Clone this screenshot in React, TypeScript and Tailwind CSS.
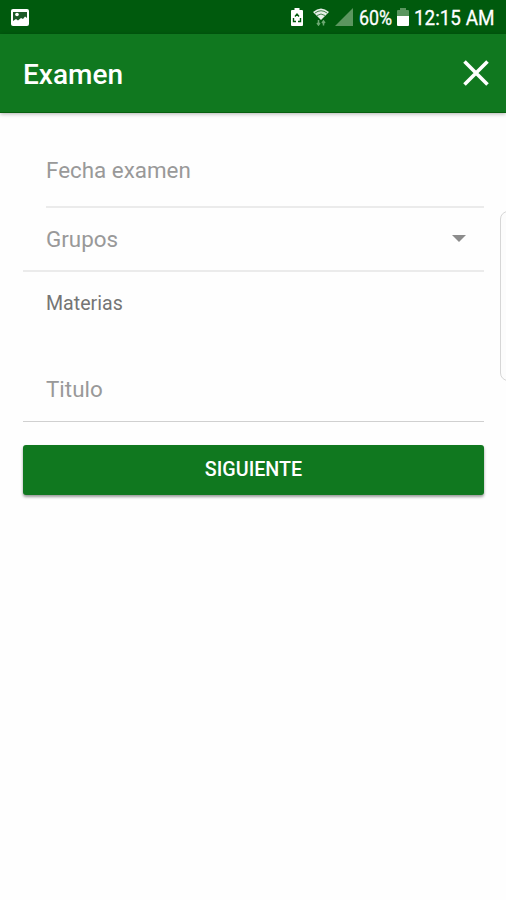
import { useState } from 'react';

const StatusBar: React.FC = () => (
  <div className="flex h-[34px] items-center justify-between bg-[#005a0d] pl-[11px] pr-3 text-white">
    <svg width="18" height="17" viewBox="0 0 18 17">
      <rect width="18" height="17" rx="2" fill="#fff" />
      <path d="M2 3h14v6l-2-1.500-2 2.500-2-1-3 2.500-2-1.500-3 2z" fill="#1d5a28" />
      <circle cx="6" cy="5.500" r="1.800" fill="#fff" />
    </svg>
    <div className="flex items-center">
      <svg width="12" height="18" viewBox="0 0 12 18">
        <path d="M3.500 0h5v2H11q1 0 1 1v14q0 1-1 1H1q-1 0-1-1V3q0-1 1-1h2.500z" fill="#fff" />
        <path d="M4 8.500L6 6l2 2.500M9.500 10v3.500H7M5 13.500H2.500V10" fill="none" stroke="#005a0d" strokeWidth="1.400" />
      </svg>
      <svg className="ml-[10px]" width="16" height="18" viewBox="0 0 16 18">
        <path d="M0 4q8-7 16 0l-8 8z" fill="#fff" opacity=".9" />
        <path d="M2 5q6-4.500 12 0M4 7.500q4-3 8 0" fill="none" stroke="#2f7538" strokeWidth=".9" />
        <path d="M5.500 12v5M4 15l1.500 2 1.500-2M10.500 17.500v-5M9 15l1.500-2 1.500 2" fill="none" stroke="#6da873" strokeWidth="1.500" />
      </svg>
      <svg className="ml-[6px]" width="18" height="18" viewBox="0 0 18 18">
        <path d="M18 0v18H0z" fill="#5b965f" />
      </svg>
      <span className="ml-[6px] w-[34px] whitespace-nowrap pt-[2px] text-[20.500px] leading-none">
        <span className="inline-block origin-left scale-x-[.87] [-webkit-text-stroke:0.3px_white]">60%</span>
      </span>
      <svg className="ml-1" width="12" height="18" viewBox="0 0 12 18">
        <path d="M3 0h6v2h2q1 0 1 1v5H0V3q0-1 1-1h2z" fill="#5b965f" />
        <path d="M0 8h12v9q0 1-1 1H1q-1 0-1-1z" fill="#fff" />
      </svg>
      <span className="ml-[5px] w-[80px] whitespace-nowrap pt-[2px] text-[20.500px] leading-none">
        <span className="inline-block origin-left scale-x-[.92] [-webkit-text-stroke:0.3px_white]">12:15 AM</span>
      </span>
    </div>
  </div>
);

const Header: React.FC = () => (
  <header className="flex h-[79px] items-center justify-between border-b border-[#08600f] bg-[#10781f] pl-[23px] pr-[17px] text-white shadow-[0_1px_4px_rgba(0,0,0,0.3)]">
    <h1 className="pt-[3px] text-[28px] font-medium leading-none">Examen</h1>
    <button aria-label="Cerrar">
      <svg width="26" height="26" viewBox="0 0 26 26">
        <path d="M1.500 1.500l23 23M24.500 1.500l-23 23" stroke="#fff" strokeWidth="3.600" />
      </svg>
    </button>
  </header>
);

const App: React.FC = () => {
  const [titulo, setTitulo] = useState('');

  return (
    <div className="relative h-[900px] w-[506px] overflow-hidden bg-[#fefefe] font-['Roboto',sans-serif]">
      <StatusBar />
      <Header />
      <main className="pl-[23px] pr-[22px] pt-[21px]">
        <div className="ml-[23px] flex h-[74px] items-center border-b-2 border-[#ebebeb] pt-[2px] text-[22.400px] text-[#999]">
          Fecha examen
        </div>
        <div className="flex h-16 items-center justify-between border-b-2 border-[#ebebeb] pl-[23px] pr-[18px] text-[22.400px] text-[#999]">
          <span className="pt-[2px]">Grupos</span>
          <svg className="mb-[2px]" width="14" height="7" viewBox="0 0 14 7">
            <path d="M0 0h14L7 7z" fill="#8c8c8c" />
          </svg>
        </div>
        <div className="flex h-[86px] items-start pl-[23px] pt-5 text-[19.600px] leading-6 text-[#757575]">
          Materias
        </div>
        <div className="flex h-16 items-center border-b border-[#d0d0d0] pl-[23px]">
          <input
            className="w-full bg-transparent text-[22.400px] text-[#444] outline-none placeholder:text-[#999]"
            placeholder="Titulo"
            value={titulo}
            onChange={(e) => setTitulo(e.target.value)}
          />
        </div>
        <button className="mt-[23px] flex h-[50px] w-full items-center justify-center rounded-[3px] bg-[#10781f] text-[19.700px] font-medium text-white shadow-[0_2px_3px_rgba(0,0,0,0.4)]">
          SIGUIENTE
        </button>
      </main>
      {/* edge panel handle */}
      <div className="absolute left-[500px] top-[211px] h-[170px] w-5 rounded-lg border border-[#d6d6d6] bg-[#fcfcfc]" />
    </div>
  );
};

export default App;
